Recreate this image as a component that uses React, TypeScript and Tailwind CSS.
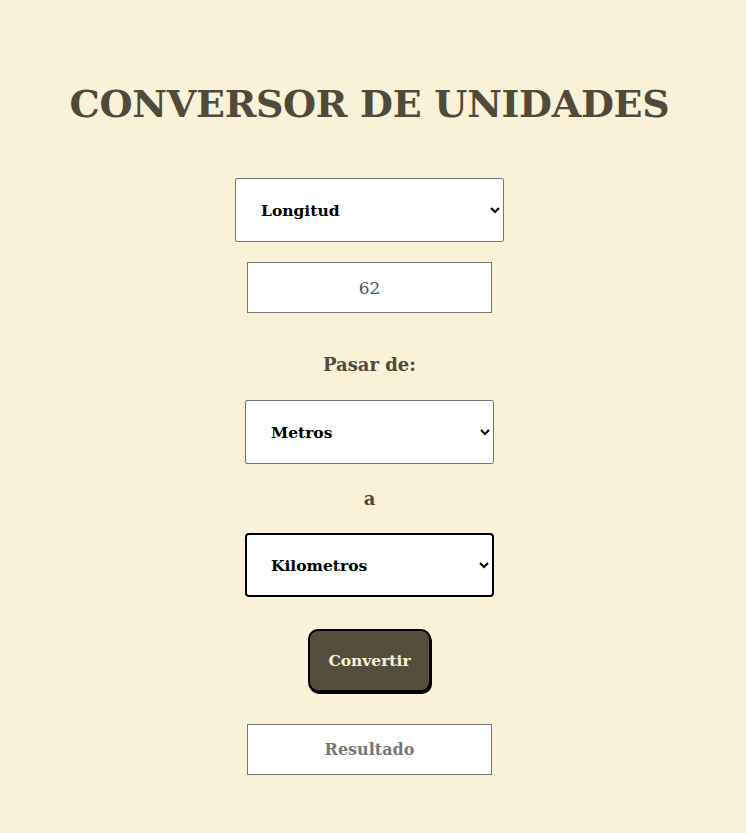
import { useState } from "react";

const serif = "font-['DejaVu_Serif','Liberation_Serif',serif]";

export default function App() {
  const [tipo, setTipo] = useState("longitud");
  const [valor, setValor] = useState("62");
  const [de, setDe] = useState("m");
  const [a, setA] = useState("km");

  return (
    <div className={`min-h-[833px] bg-[#f9f2d9] flex flex-col items-center pr-[7px] ${serif}`}>
      <h1 className="mt-[78px] text-[38px] leading-[52px] font-bold text-[#4f4a3a] tracking-[-0.3px]">
        CONVERSOR DE UNIDADES
      </h1>

      <select
        value={tipo}
        onChange={(e) => setTipo(e.target.value)}
        className={`mt-[48px] w-[269px] h-[64px] bg-white border border-[#767676] rounded-[2px] pl-[21px] pr-2 text-[15.5px] font-bold text-black ${serif}`}
      >
        <option value="longitud">Longitud</option>
        <option value="masa">Masa</option>
        <option value="volumen">Volumen</option>
      </select>

      <input
        value={valor}
        onChange={(e) => setValor(e.target.value)}
        className={`mt-[20px] w-[245px] h-[51px] bg-white border border-[#767676] text-center text-[17px] text-[#555] ${serif}`}
      />

      <p className="mt-[38px] text-[18px] font-bold text-[#524a39] leading-[28px]">Pasar de:</p>

      <select
        value={de}
        onChange={(e) => setDe(e.target.value)}
        className={`mt-[21px] w-[249px] h-[64px] bg-white border border-[#767676] rounded-[2px] pl-[21px] pr-2 text-[15.5px] font-bold text-black ${serif}`}
      >
        <option value="m">Metros</option>
        <option value="km">Kilometros</option>
        <option value="cm">Centimetros</option>
      </select>

      <p className="mt-[22px] text-[18px] font-bold text-[#524a39] leading-[26px]">a</p>

      <select
        value={a}
        onChange={(e) => setA(e.target.value)}
        className={`mt-[21px] w-[249px] h-[64px] bg-white border-2 border-black rounded-[4px] pl-[20px] pr-2 text-[15.5px] font-bold text-black ${serif}`}
      >
        <option value="m">Metros</option>
        <option value="km">Kilometros</option>
        <option value="cm">Centimetros</option>
      </select>

      <button
        className={`mt-[32px] w-[123px] h-[63px] bg-[#554d3b] border-2 border-black rounded-[10px] shadow-[1px_2px_0_#000] text-[#f9f2d9] text-[15.5px] font-bold ${serif}`}
      >
        Convertir
      </button>

      <input
        readOnly
        placeholder="Resultado"
        className={`mt-[32px] w-[245px] h-[51px] bg-white border border-[#767676] text-center text-[16px] font-semibold placeholder:text-[#777] ${serif}`}
      />
    </div>
  );
}
